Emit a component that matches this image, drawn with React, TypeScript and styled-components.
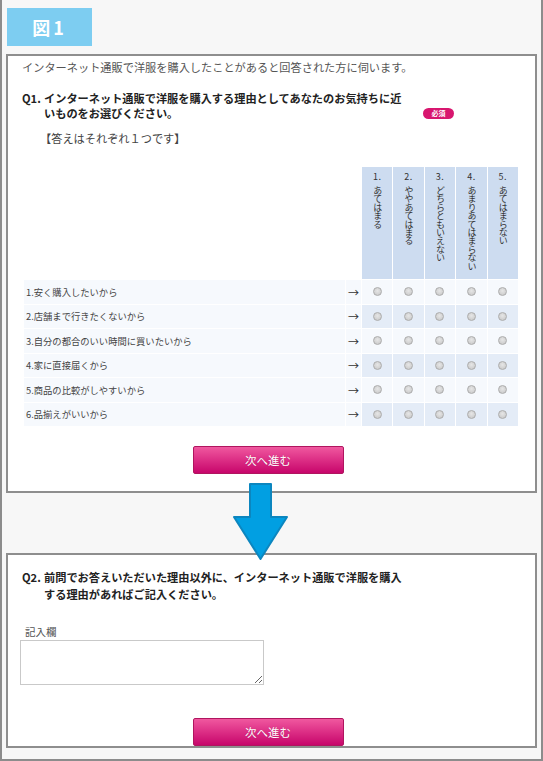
import React from "react";
import styled, { createGlobalStyle } from "styled-components";

const Global = createGlobalStyle`
  html, body { margin: 0; padding: 0; background: #fff; }
  body { font-family: "Noto Sans CJK JP", "Noto Sans", sans-serif; }
  * { box-sizing: border-box; }
`;

const Frame = styled.div`
  position: relative;
  width: 543px;
  height: 761px;
  background: #f7f7f7;
  border: 2px solid #8c8c8c;
  border-top: 0;
  padding: 8px 4px 0 4px;
`;

const FigLabel = styled.div`
  width: 85px;
  height: 38px;
  margin-left: 1px;
  background: #7dcdf1;
  color: #fff;
  font-weight: 700;
  font-size: 18px;
  letter-spacing: 3px;
  display: flex;
  align-items: center;
  justify-content: center;
`;

const Panel = styled.section<{ $top: number; $pt: number; $pb: number }>`
  margin-top: ${(p) => p.$top}px;
  background: #fff;
  border: 2px solid #8e8e8e;
  padding: ${(p) => p.$pt}px 16px ${(p) => p.$pb}px 14px;
`;

const Intro = styled.p`
  margin: 0;
  font-size: 11.2px;
  line-height: 16px;
  color: #555;
  white-space: nowrap;
`;

const QuestionRow = styled.div<{ $mt: number; $lh: number }>`
  display: flex;
  align-items: flex-end;
  margin-top: ${(p) => p.$mt}px;
  font-size: 11.2px;
  line-height: ${(p) => p.$lh}px;
  font-weight: 700;
  color: #222;
`;

const QNum = styled.span`
  flex: 0 0 22px;
  align-self: flex-start;
  white-space: nowrap;
`;

const QText = styled.div<{ $w: number }>`
  width: ${(p) => p.$w}px;
`;

const QLine = styled.span`
  display: block;
  white-space: nowrap;
`;

const Badge = styled.span`
  width: 31px;
  height: 11px;
  margin-bottom: 1px;
  border-radius: 6px;
  background: #d8166f;
  color: #fff;
  font-size: 7px;
  line-height: 11px;
  font-weight: 700;
  text-align: center;
`;

const Instruction = styled.p`
  margin: 10px 0 0 18px;
  font-size: 11.2px;
  line-height: 16px;
  color: #444;
`;

const Grid = styled.div`
  margin: 21px 0 0 2px;
  width: 494px;
  display: grid;
  grid-template-columns: 321px 15px repeat(5, 1fr);
  grid-template-rows: 112px;
  grid-auto-rows: 23.5px;
  gap: 1px;
`;

const Blank = styled.div``;

const HeadCell = styled.div`
  background: #cddcf0;
  color: #333;
  font-size: 9px;
  display: flex;
  flex-direction: column;
  align-items: center;
  padding-top: 4px;
`;

const HeadNum = styled.span`
  line-height: 12px;
  letter-spacing: 0.5px;
`;

const HeadText = styled.span`
  writing-mode: vertical-rl;
  margin-top: 3px;
  line-height: 12px;
  letter-spacing: -0.6px;
`;

const LabelCell = styled.div`
  background: #f6f9fd;
  color: #444;
  font-size: 9.3px;
  display: flex;
  align-items: center;
  padding-left: 2px;
  white-space: nowrap;
`;

const ArrowCell = styled.div`
  background: #f6f9fd;
  color: #333;
  font-size: 11px;
  display: flex;
  align-items: center;
  justify-content: center;
`;

const RadioCell = styled.div<{ $alt: boolean }>`
  background: ${(p) => (p.$alt ? "#e4ecf7" : "#f6f9fd")};
  display: flex;
  align-items: center;
  justify-content: center;
`;

const Radio = styled.span`
  width: 9px;
  height: 9px;
  border-radius: 50%;
  border: 1px solid #acacac;
  background: radial-gradient(circle at 50% 40%, #e6e6e6 0%, #cfcfcf 70%, #c4c4c4 100%);
`;

const ButtonRow = styled.div<{ $mt: number }>`
  display: flex;
  justify-content: center;
  margin-top: ${(p) => p.$mt}px;
`;

const NextButton = styled.button`
  width: 151px;
  height: 28px;
  margin-right: 5px;
  border: 1px solid #b0155f;
  border-radius: 2px;
  background: linear-gradient(#f0589f 0%, #dc2e85 50%, #c7066b 100%);
  color: #fff;
  font-family: "Noto Sans CJK JP", sans-serif;
  font-size: 11.5px;
  padding: 0;
  text-shadow: 0 0 1px rgba(120, 0, 50, 0.4);
`;

const FieldLabel = styled.div`
  margin: 21.5px 0 0 3px;
  font-size: 10.5px;
  line-height: 14px;
  color: #555;
`;

const TextBox = styled.textarea`
  display: block;
  margin: 1.5px 0 0 -2px;
  width: 244px;
  height: 45px;
  border: 1px solid #c9c9c9;
  border-radius: 0;
  background: #fff;
  font-family: inherit;
`;

const ArrowWrap = styled.div`
  position: absolute;
  left: 230px;
  top: 482px;
  width: 57px;
  height: 79px;
`;

const cols = ["あてはまる", "ややあてはまる", "どちらともいえない", "あまりあてはまらない", "あてはまらない"];
const items = [
  "安く購入したいから",
  "店舗まで行きたくないから",
  "自分の都合のいい時間に買いたいから",
  "家に直接届くから",
  "商品の比較がしやすいから",
  "品揃えがいいから",
];

export default function App() {
  return (
    <>
      <Global />
      <Frame>
        <FigLabel>図1</FigLabel>
        <Panel $top={8} $pt={3} $pb={17}>
          <Intro>インターネット通販で洋服を購入したことがあると回答された方に伺います。</Intro>
          <QuestionRow $mt={16} $lh={14.5}>
            <QNum>Q1.</QNum>
            <QText $w={379}>
              <QLine>インターネット通販で洋服を購入する理由としてあなたのお気持ちに近</QLine>
              <QLine>いものをお選びください。</QLine>
            </QText>
            <Badge>必須</Badge>
          </QuestionRow>
          <Instruction>【答えはそれぞれ１つです】</Instruction>
          <Grid>
            <Blank />
            <Blank />
            {cols.map((c, i) => (
              <HeadCell key={c}>
                <HeadNum>{i + 1}.</HeadNum>
                <HeadText>{c}</HeadText>
              </HeadCell>
            ))}
            {items.map((it, r) => (
              <React.Fragment key={it}>
                <LabelCell>
                  {r + 1}.{it}
                </LabelCell>
                <ArrowCell>→</ArrowCell>
                {cols.map((c) => (
                  <RadioCell key={c} $alt={r % 2 === 1}>
                    <Radio />
                  </RadioCell>
                ))}
              </React.Fragment>
            ))}
          </Grid>
          <ButtonRow $mt={20}>
            <NextButton>次へ進む</NextButton>
          </ButtonRow>
        </Panel>
        <Panel $top={60} $pt={14} $pb={0}>
          <QuestionRow $mt={0} $lh={17}>
            <QNum>Q2.</QNum>
            <QText $w={420}>
              <QLine>前問でお答えいただいた理由以外に、インターネット通販で洋服を購入</QLine>
              <QLine>する理由があればご記入ください。</QLine>
            </QText>
          </QuestionRow>
          <FieldLabel>記入欄</FieldLabel>
          <TextBox />
          <ButtonRow $mt={33}>
            <NextButton>次へ進む</NextButton>
          </ButtonRow>
        </Panel>
        <ArrowWrap>
          <svg width="57" height="79" viewBox="0 0 57 79">
            <path
              d="M18 2 H39 V35 H55 L28.5 77 L2 35 H18 Z"
              fill="#019fe2"
              stroke="#0c86bf"
              strokeWidth="2"
              strokeLinejoin="round"
            />
          </svg>
        </ArrowWrap>
      </Frame>
    </>
  );
}
